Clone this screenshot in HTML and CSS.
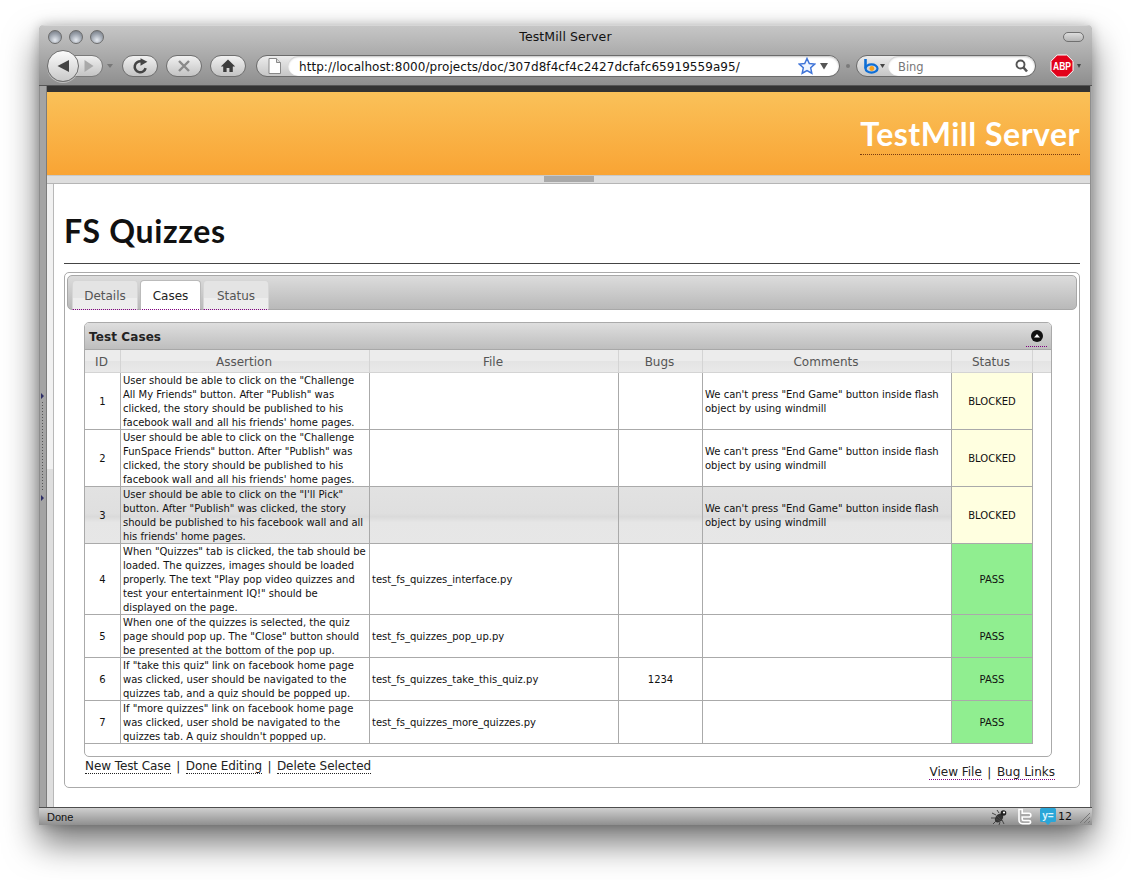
FILE: index.html
```html
<!DOCTYPE html>
<html lang="en">
<head>
<meta charset="utf-8">
<title>TestMill Server</title>
<link rel="stylesheet" href="styles.css">
</head>
<body>
<div class="window">
  <div class="chrome">
    <div class="titlebar">
      <div class="lights"><i class="light"></i><i class="light"></i><i class="light"></i></div>
      <div class="wintitle">TestMill Server</div>
      <i class="pill"></i>
    </div>
    <div class="toolbar">
      <div class="nav">
        <div class="fwd"><svg width="12" height="14" viewBox="0 0 12 14"><path d="M1.500 1l9 6-9 6z" fill="#a9a9a9"/></svg></div>
        <div class="back"><svg width="14" height="14" viewBox="0 0 14 14"><path d="M13 1v12L1.500 7z" fill="#444"/></svg></div>
      </div>
      <i class="caret caret-nav"></i>
      <div class="btn"><svg width="17" height="17" viewBox="0 0 16 16"><path d="M12.800 9.500A5.200 5.200 0 1 1 9 3.200" fill="none" stroke="#444" stroke-width="2.400"/><path d="M8 .2l6.500 3.300L8 7.200z" fill="#444"/></svg></div>
      <div class="btn"><svg width="14" height="14" viewBox="0 0 14 14"><path d="M2 2l10 10M12 2L2 12" stroke="#8a8a8a" stroke-width="2.400"/></svg></div>
      <div class="btn"><svg width="16" height="16" viewBox="0 0 16 16"><path d="M8 1.500L.8 8.500h2.400V14h3.400v-4h2.800v4h3.400V8.500h2.400z" fill="#3c3c3c"/></svg></div>
      <div class="urlbar">
        <div class="favslot"><svg width="13" height="16" viewBox="0 0 13 16"><path d="M1 .5h7.500l4 4v11H1z" fill="#fff" stroke="#888"/><path d="M8.500 .5v4h4" fill="#ddd" stroke="#888"/></svg></div>
        <div class="urlfield">
          <span class="urltext">http://localhost:8000/projects/doc/307d8f4cf4c2427dcfafc65919559a95/</span>
          <svg class="star" width="18" height="18" viewBox="0 0 18 18"><path d="M9 1.500l2.300 5 5.400.6-4 3.700 1.100 5.400L9 13.500l-4.800 2.700 1.100-5.400-4-3.700 5.400-.6z" fill="#eef4ff" stroke="#3f74d8" stroke-width="1.500"/></svg>
          <svg width="10" height="8" viewBox="0 0 10 8"><path d="M1 1h8L5 7.500z" fill="#555"/></svg>
        </div>
      </div>
      <i class="dot"></i>
      <div class="searchbar">
        <div class="engine">
          <svg width="15" height="15" viewBox="0 0 15 15"><path d="M1.500 0v9.500" stroke="#0d6ed6" stroke-width="2.600"/><ellipse cx="7.500" cy="9.500" rx="6" ry="4.200" fill="none" stroke="#0d6ed6" stroke-width="2.200"/><circle cx="7.800" cy="9.500" r="2.400" fill="#f7a11a"/></svg>
          <svg width="5" height="4" viewBox="0 0 5 4"><path d="M0 0h5L2.500 4z" fill="#444"/></svg>
        </div>
        <div class="searchfield">
          <span class="bing">Bing</span>
          <svg width="13" height="14" viewBox="0 0 13 14"><circle cx="5.500" cy="5.500" r="4" fill="none" stroke="#555" stroke-width="1.900"/><path d="M8.500 8.500l3.500 4" stroke="#555" stroke-width="2.600"/></svg>
        </div>
      </div>
      <svg class="abp" width="24" height="24" viewBox="0 0 24 24"><path d="M7.200 1h9.600L23 7.200v9.600L16.800 23H7.200L1 16.800V7.200z" fill="#e2001a" stroke="#fff" stroke-width="1"/><text x="12" y="15.500" text-anchor="middle" textLength="18" lengthAdjust="spacingAndGlyphs" class="abptext">ABP</text></svg>
      <i class="caret caret-abp"></i>
    </div>
  </div>

  <div class="viewport">
    <div class="sidebar"><svg width="4" height="108" viewBox="0 0 4 108"><path d="M1 0l3 3-3 3zM1 102l3 3-3 3z" fill="#2d2d66"/><path d="M2.500 9v90" stroke="#555" stroke-dasharray="1 2"/></svg></div>
    <div class="page">
      <div class="topbar"></div>
      <header class="banner"><a class="brand">TestMill Server</a></header>
      <div class="splitter"><i class="handle"></i></div>
      <main class="content">
        <h1 class="pagetitle">FS Quizzes</h1>
        <div class="tabbox">
          <div class="tabstrip">
            <a class="tab">Details</a>
            <a class="tab tab-active">Cases</a>
            <a class="tab">Status</a>
          </div>
          <section class="cases">
            <div class="caseshead">
              <span>Test Cases</span>
              <a class="collapse"><svg width="12" height="12" viewBox="0 0 12 12"><circle cx="6" cy="6" r="6" fill="#111"/><path d="M3 7.500L6 4l3 3.500z" fill="#fff"/></svg></a>
            </div>
            <table class="grid">
              <colgroup><col class="c-id"><col class="c-as"><col class="c-file"><col class="c-bugs"><col class="c-com"><col class="c-st"><col></colgroup>
              <thead>
                <tr><th>ID</th><th>Assertion</th><th>File</th><th>Bugs</th><th>Comments</th><th>Status</th><th></th></tr>
              </thead>
              <tbody>
                <tr>
                  <td class="mid">1</td>
                  <td>User should be able to click on the "Challenge All My Friends" button. After "Publish" was clicked, the story should be published to his facebook wall and all his friends' home pages.</td>
                  <td></td><td></td>
                  <td>We can't press "End Game" button inside flash object by using windmill</td>
                  <td class="mid blocked">BLOCKED</td><td class="gap"></td>
                </tr>
                <tr>
                  <td class="mid">2</td>
                  <td>User should be able to click on the "Challenge FunSpace Friends" button. After "Publish" was clicked, the story should be published to his facebook wall and all his friends' home pages.</td>
                  <td></td><td></td>
                  <td>We can't press "End Game" button inside flash object by using windmill</td>
                  <td class="mid blocked">BLOCKED</td><td class="gap"></td>
                </tr>
                <tr class="hover">
                  <td class="mid">3</td>
                  <td>User should be able to click on the "I'll Pick" button. After "Publish" was clicked, the story should be published to his facebook wall and all his friends' home pages.</td>
                  <td></td><td></td>
                  <td>We can't press "End Game" button inside flash object by using windmill</td>
                  <td class="mid blocked">BLOCKED</td><td class="gap"></td>
                </tr>
                <tr>
                  <td class="mid">4</td>
                  <td>When "Quizzes" tab is clicked, the tab should be loaded. The quizzes, images should be loaded properly. The text "Play pop video quizzes and test your entertainment IQ!" should be displayed on the page.</td>
                  <td>test_fs_quizzes_interface.py</td><td></td><td></td>
                  <td class="mid pass">PASS</td><td class="gap"></td>
                </tr>
                <tr>
                  <td class="mid">5</td>
                  <td>When one of the quizzes is selected, the quiz page should pop up. The "Close" button should be presented at the bottom of the pop up.</td>
                  <td>test_fs_quizzes_pop_up.py</td><td></td><td></td>
                  <td class="mid pass">PASS</td><td class="gap"></td>
                </tr>
                <tr>
                  <td class="mid">6</td>
                  <td>If "take this quiz" link on facebook home page was clicked, user should be navigated to the quizzes tab, and a quiz should be popped up.</td>
                  <td>test_fs_quizzes_take_this_quiz.py</td><td class="mid">1234</td><td></td>
                  <td class="mid pass">PASS</td><td class="gap"></td>
                </tr>
                <tr>
                  <td class="mid">7</td>
                  <td>If "more quizzes" link on facebook home page was clicked, user shold be navigated to the quizzes tab. A quiz shouldn't popped up.</td>
                  <td>test_fs_quizzes_more_quizzes.py</td><td></td><td></td>
                  <td class="mid pass">PASS</td><td class="gap"></td>
                </tr>
              </tbody>
            </table>
          </section>
          <div class="actions">
            <div class="links"><a>New Test Case</a><span>|</span><a>Done Editing</a><span>|</span><a>Delete Selected</a></div>
            <div class="links links-right"><a class="visited">View File</a><span>|</span><a class="visited">Bug Links</a></div>
          </div>
        </div>
      </main>
    </div>
  </div>

  <footer class="statusbar">
    <span class="done">Done</span>
    <div class="statusicons">
      <svg width="18" height="16" viewBox="0 0 18 16"><ellipse cx="8" cy="9" rx="3.500" ry="5" transform="rotate(40 8 9)" fill="#333"/><circle cx="12.500" cy="4" r="2.800" fill="#222"/><circle cx="13" cy="3.500" r="1.100" fill="#fff"/><path d="M5 6L1 4M4 9H0M5 12l-3 3M8 4L6 1M11 11l2 4M9 13l-1 3M6 7l5 5M5 10l4 2" stroke="#444" fill="none"/></svg>
      <svg class="tw" width="15" height="17" viewBox="0 0 15 17"><path d="M2 1.500h3.200v3.800h6.800a1.700 1.700 0 0 1 0 3.700H5.200v2c0 1 .6 1.500 1.500 1.500h5.300a1.500 1.500 0 0 1 0 3.200H5.500C3 15.700 2 14 2 12z" fill="#aaa" stroke="#fff" stroke-width="1.600"/></svg>
      <svg class="yc" width="16" height="17" viewBox="0 0 16 17"><path d="M1.500 0h13A1.500 1.500 0 0 1 16 1.500v11a1.500 1.500 0 0 1-1.500 1.500H11l-3 3-3-3H1.500A1.500 1.500 0 0 1 0 12.500v-11A1.500 1.500 0 0 1 1.500 0z" fill="#2aa6d8"/><text x="8" y="11" text-anchor="middle" class="yctext">y=</text></svg>
      <span class="count">12</span>
    </div>
    <svg class="grip" width="12" height="12" viewBox="0 0 12 12"><path d="M1 11L11 1M5 11l6-6M9 11l2-2" stroke="#777"/></svg>
  </footer>
</div>
</body>
</html>
```

FILE: styles.css
```css
* { box-sizing: border-box; }
html, body { margin: 0; height: 100%; }
body {
  background: #fff;
  padding: 25px 39px 0 39px;
  font-family: "DejaVu Sans", Verdana, sans-serif;
  overflow: hidden;
}
a { color: inherit; text-decoration: none; }

.window {
  width: 1053px;
  height: 800px;
  display: flex;
  flex-direction: column;
  border-radius: 5px 5px 0 0;
  box-shadow: 0 18px 34px rgba(0,0,0,.55), 0 0 12px rgba(0,0,0,.22);
  background: #a8a8a8;
  overflow: hidden;
}

/* Browser chrome */
.chrome {
  height: 61px;
  flex: none;
  background: linear-gradient(#c6c6c6, #8e8e8e);
  border-top: 1px solid #d6d6d6;
  border-bottom: 1px solid #555;
}
.titlebar {
  height: 21px;
  display: flex;
  align-items: center;
  padding: 0 8px 0 9px;
}
.lights { display: flex; gap: 7px; }
.light {
  width: 14px; height: 14px; border-radius: 50%;
  background: radial-gradient(circle at 50% 75%, #e6eaf0 0, #9ca3ad 55%, #6b7078 100%);
  border: 1px solid #6c6c6c;
}
.wintitle {
  flex: 1;
  text-align: center;
  font: 12.5px "DejaVu Sans", Verdana, sans-serif;
  letter-spacing: .1px;
  color: #111;
  padding-right: 36px;
}
.pill {
  width: 21px; height: 10px; border-radius: 5px;
  border: 1px solid #707070;
  background: linear-gradient(#dcdcdc, #b5b5b5);
}
.toolbar {
  height: 38px;
  display: flex;
  align-items: center;
  padding: 0 0 0 8px;
}
.nav { width: 56px; height: 32px; position: relative; flex: none; }
.back {
  width: 32px; height: 32px; border-radius: 50%;
  border: 1px solid #6d6d6d;
  background: linear-gradient(#fbfbfb, #c9c9c9);
  display: flex; align-items: center; justify-content: center;
  position: absolute; left: 0; top: 0;
  box-shadow: 0 1px 0 rgba(255,255,255,.4);
}
.fwd {
  position: absolute; left: 20px; top: 5px;
  width: 36px; height: 22px;
  border-radius: 0 11px 11px 0;
  border: 1px solid #7a7a7a;
  background: linear-gradient(#f0f0f0, #c4c4c4);
  display: flex; align-items: center; justify-content: flex-end; padding-right: 7px;
}
.caret { width: 0; height: 0; border-style: solid; border-color: #666 transparent transparent; flex: none; }
.caret-nav { border-width: 4px 3px 0; margin: 0 9px 0 4px; border-top-color: #777; }
.btn {
  width: 36px; height: 22px; border-radius: 11px;
  border: 1px solid #6f6f6f;
  background: linear-gradient(#f1f1f1, #c3c3c3);
  display: flex; align-items: center; justify-content: center;
  margin-right: 8px;
  flex: none;
}
.btn + .btn + .btn { margin-right: 10px; }
.urlbar {
  width: 584px; height: 22px;
  display: flex;
  border: 1px solid #6b6b6b;
  border-radius: 11px;
  background: linear-gradient(#ececec, #c6c6c6);
  flex: none;
  overflow: hidden;
}
.favslot { width: 31px; display: flex; align-items: center; justify-content: center; flex: none; padding-left: 4px; }
.urlfield {
  flex: 1;
  background: #fff;
  border-radius: 10px;
  box-shadow: inset 0 1px 2px rgba(0,0,0,.25);
  display: flex;
  align-items: center;
  gap: 3px;
  padding: 0 10px 0 11px;
}
.urltext { flex: 1; font-size: 12px; color: #111; white-space: nowrap; letter-spacing: .06px; padding-top: 2px; }
.star { flex: none; }
.dot { width: 4px; height: 4px; border-radius: 50%; background: #7a7a7a; margin: 0 6px; flex: none; }
.searchbar {
  width: 180px; height: 22px;
  display: flex;
  border: 1px solid #6b6b6b;
  border-radius: 11px;
  background: linear-gradient(#ececec, #c6c6c6);
  flex: none;
  overflow: hidden;
}
.engine { width: 31px; display: flex; align-items: center; gap: 1px; padding-left: 7px; flex: none; }
.searchfield {
  flex: 1;
  background: #fff;
  border-radius: 10px;
  box-shadow: inset 0 1px 2px rgba(0,0,0,.25);
  display: flex;
  align-items: center;
  justify-content: space-between;
  padding: 0 7px 0 10px;
}
.bing { font-size: 11.5px; color: #777; padding-top: 2px; }
.abp { margin-left: 14px; flex: none; }
.abptext { font: bold 10px "Liberation Sans", Arial, sans-serif; fill: #fff; }
.caret-abp { border-width: 4px 2.500px 0; margin-left: 3px; border-top-color: #444; }

/* Viewport */
.viewport { flex: 1; display: flex; min-height: 0; }
.sidebar {
  width: 8px; flex: none;
  background: #a4a4a4;
  border-left: 1px solid #8c8c8c;
  border-right: 1px solid #7c7c7c;
  display: flex; align-items: flex-start; padding: 307px 0 0 0;
}
.page {
  width: 1044px;
  flex: none;
  display: flex;
  flex-direction: column;
  background: linear-gradient(#dedede 97px, #f1f1f1 97px, #f1f1f1 383px, #dedede 383px);
  border-right: 1px solid #8f8f8f;
}
.topbar { height: 6px; background: #333; flex: none; }
.banner {
  height: 84px; flex: none;
  background: linear-gradient(#fac159, #f9a434);
  border-bottom: 1px solid #c9c9c9;
  display: flex;
  justify-content: flex-end;
  padding: 22px 10px 0 0;
}
.brand {
  font: bold 32px/39px "Lato", sans-serif;
  height: 41px;
  color: #fff;
  border-bottom: 1px dotted #7a3b10;
  letter-spacing: .5px;
}
.splitter { height: 8px; flex: none; display: flex; justify-content: center; background: #dedede; border-bottom: 1px solid #b5b5b5; }
.handle { width: 50px; height: 6px; background: #a9a9a9; }
.content {
  flex: 1;
  margin-left: 6px;
  background: #fff;
  border-left: 1px solid #b8b8b8;
  padding: 25px 10px 0 10px;
  min-height: 0;
}
.pagetitle {
  margin: 0;
  font: bold 32px/44px "Lato", sans-serif;
  color: #111;
  height: 55px;
  border-bottom: 1px solid #444;
  letter-spacing: .65px;
}
.tabbox {
  margin-top: 8px;
  height: 516px;
  border: 1px solid #aaa;
  border-radius: 5px;
  padding: 2px 2px 0 2px;
}
.tabstrip {
  height: 35px;
  display: flex;
  gap: 2px;
  padding: 4px 0 0 4px;
  background: linear-gradient(#dcdcdc, #b9b9b9);
  border: 1px solid #a8a8a8;
  border-radius: 5px;
}
.tab {
  height: 30px;
  padding: 6px 0 0;
  font: 12px/18px "DejaVu Sans", Verdana, sans-serif;
  color: #555;
  border: 1px solid #d6d6d6;
  border-bottom: 1px dotted #800080;
  border-radius: 4px 4px 0 0;
  background: linear-gradient(#e4e4e4 0, #e4e4e4 60%, #ededed 60%, #ededed 100%);
  width: 66px;
  text-align: center;
  white-space: nowrap;
}
.tab-active {
  background: #fff;
  color: #222;
  width: 61px;
  border-color: #bbb #bbb #800080;
}
.cases {
  margin: 12px 0 0 17px;
  width: 968px;
  height: 435px;
  border: 1px solid #aaa;
  border-radius: 5px;
  overflow: hidden;
}
.caseshead {
  height: 27px;
  display: flex;
  align-items: center;
  justify-content: space-between;
  padding: 1px 4px 0 4px;
  background: linear-gradient(#dedede, #bebebe);
  font: bold 12px "DejaVu Sans", Verdana, sans-serif;
  letter-spacing: .1px;
  color: #222;
  border-bottom: 1px solid #a8a8a8;
}
.collapse {
  align-self: flex-end;
  height: 18px;
  width: 21px;
  margin-bottom: 2px;
  padding-top: 1px;
  border-bottom: 1px dotted #800080;
  display: flex;
  justify-content: center;
}
.grid {
  table-layout: fixed;
  border-collapse: separate;
  border-spacing: 0;
  width: 966px;
  font: 10px/14px "DejaVu Sans", Verdana, sans-serif;
  color: #111;
}
.c-id { width: 36px; }
.c-as { width: 249px; }
.c-file { width: 249px; }
.c-bugs { width: 84px; }
.c-com { width: 249px; }
.c-st { width: 81px; }
.grid th {
  height: 23px;
  padding: 2px 2px 0 0;
  font: normal 12px "DejaVu Sans", Verdana, sans-serif;
  color: #555;
  background: linear-gradient(#ececec 0, #ececec 50%, #e4e4e4 50%, #e9e9e9 100%);
  border-right: 1px solid #d4d4d4;
  border-bottom: 1px solid #d4d4d4;
}
.grid th:last-child { border-right: 0; }
.grid td {
  padding: 1px 2px 0;
  vertical-align: middle;
  border-right: 1px solid #aaa;
  box-shadow: inset 0 -1px 0 #aaa;
}
.grid td.gap { border: 0; background: #fff; box-shadow: none; }
.mid { text-align: center; }
.grid td.blocked { background: #ffffe0; }
.grid td.pass { background: #90ee90; }
.hover td { background: linear-gradient(#e2e2e2 0, #dfdfdf 46%, #dadada 52%, #e6e6e6 62%, #e7e7e7 100%); }

.actions {
  display: flex;
  justify-content: space-between;
  margin: 0 22px 0 18px;
  font: 12px/16px "DejaVu Sans", Verdana, sans-serif;
  color: #222;
}
.links { display: flex; gap: 5.5px; align-items: flex-start; padding-top: 2px; letter-spacing: -.08px; }
.links a { border-bottom: 1px dotted #222; line-height: 14px; }
.links-right { padding-top: 8px; letter-spacing: 0; }
.links a.visited { border-bottom-color: #800080; }

/* Status bar */
.statusbar {
  height: 18px;
  flex: none;
  display: flex;
  align-items: center;
  position: relative;
  padding: 0 3px 0 8px;
  background: linear-gradient(#cfcfcf, #8f8f8f);
  border-top: 1px solid #4d4d4d;
  font: 11px "Liberation Sans", Arial, sans-serif;
  color: #111;
}
.done { flex: 1; }
.statusicons { display: flex; align-items: center; gap: 8px; margin-right: 17px; }
.yctext { font: bold 10px "Liberation Sans", Arial, sans-serif; fill: #dff4fc; }
.count { margin-left: -6px; font: 11px "DejaVu Sans", sans-serif; }
.grip { position: absolute; right: 1px; bottom: 1px; }
```
